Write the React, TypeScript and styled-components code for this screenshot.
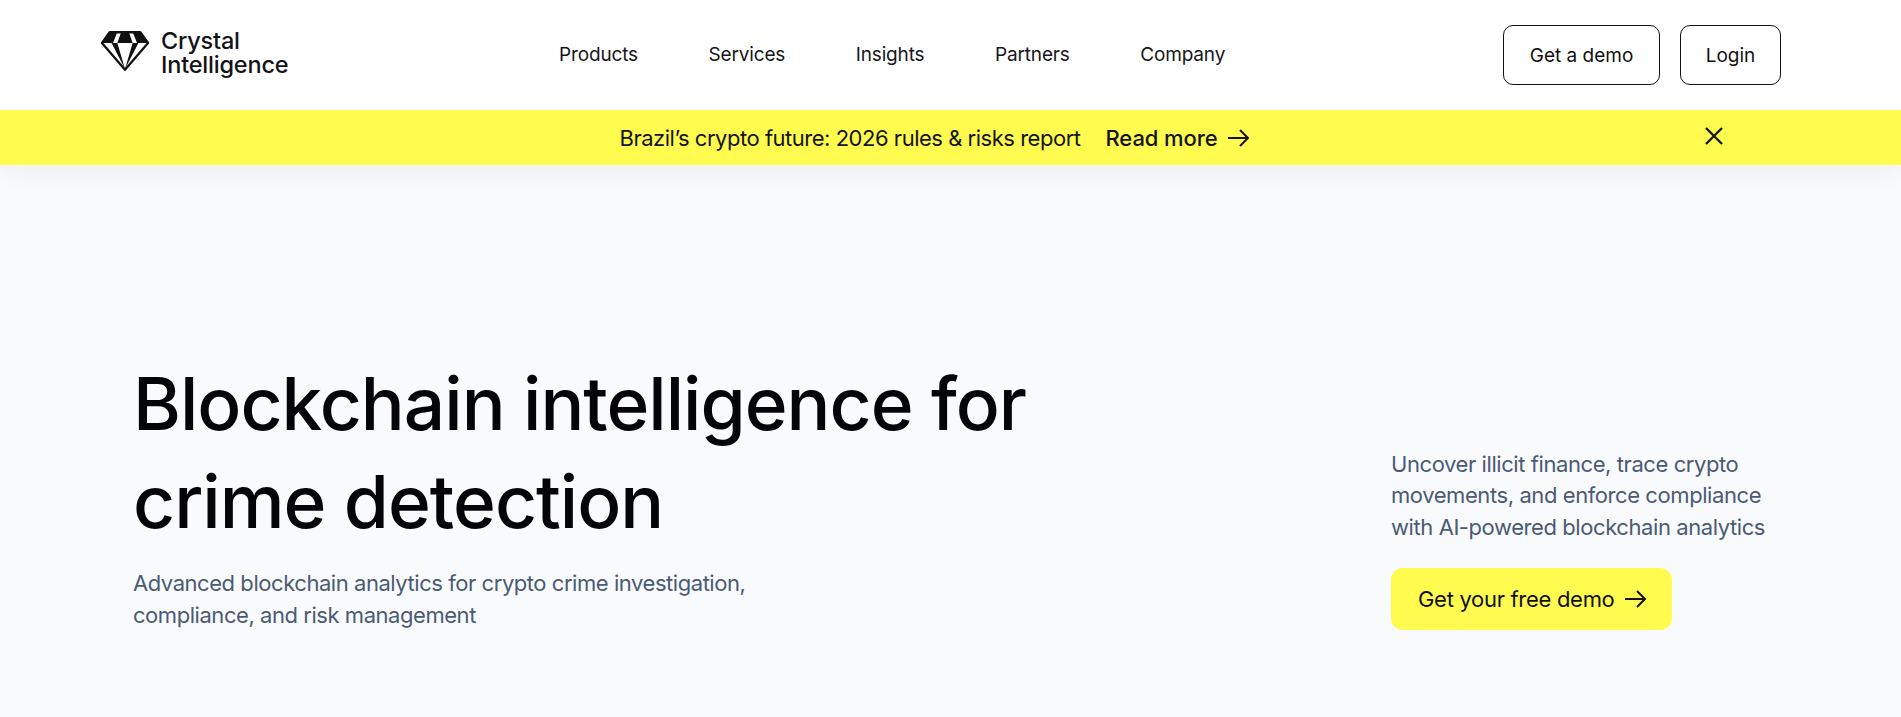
import React from "react";
import styled, { createGlobalStyle } from "styled-components";

const Global = createGlobalStyle`
  html, body { margin: 0; padding: 0; background: #f9fafc; }
  body { font-family: "Inter", "Liberation Sans", sans-serif; color: #0b0b0f; overflow: hidden; }
  * { box-sizing: border-box; }
`;

const Page = styled.div`
  width: 1901px;
  height: 717px;
  overflow: hidden;
  background: #f9fafc;
`;
const Top = styled.div`
  box-shadow: 0 6px 24px rgba(20, 30, 50, 0.05);
`;
const Header = styled.header`
  height: 110px;
  background: #fff;
  display: flex;
  align-items: center;
  padding: 0 120px 0 101px;
`;
const Brand = styled.a`
  display: flex;
  align-items: center;
  gap: 12px;
  width: 458px;
  flex: none;
  margin-bottom: 4px;
`;
const BrandName = styled.span`
  font-size: 23.5px;
  line-height: 24.5px;
  font-weight: 500;
  letter-spacing: -0.2px;
  color: #141418;
`;
const LogoMark = styled.svg`
  flex: none;
  width: 48px;
  height: 40px;
  margin-bottom: 4px;
`;
const Nav = styled.nav`
  display: flex;
  gap: 70.5px;
  flex: 1;
  margin-bottom: 2px;
`;
const NavLink = styled.a`
  font-size: 19px;
  letter-spacing: -0.15px;
  color: #16161a;
`;
const Actions = styled.div`
  display: flex;
  gap: 20px;
`;
const OutlineButton = styled.a<{ $w: number }>`
  width: ${(p) => p.$w}px;
  height: 60px;
  display: flex;
  align-items: center;
  justify-content: center;
  border: 1px solid #111;
  border-radius: 10px;
  font-size: 19px;
  letter-spacing: 0;
  background: #fff;
  color: #111;
`;
const Banner = styled.div`
  height: 55px;
  background: #fffb4f;
  display: flex;
  align-items: center;
  justify-content: center;
  position: relative;
  padding-right: 32px;
  font-size: 22px;
  letter-spacing: -0.48px;
  color: #141418;
`;
const BannerText = styled.span`
  margin-right: 25px;
`;
const ReadMore = styled.a`
  display: flex;
  align-items: center;
  gap: 8px;
  font-weight: 500;
  letter-spacing: -0.1px;
`;
const Close = styled.button`
  position: absolute;
  left: 1702px;
  top: 14px;
  width: 24px;
  height: 24px;
  padding: 0;
  border: 0;
  background: none;
  color: #1a1a1a;
`;
const Hero = styled.section`
  display: flex;
  justify-content: space-between;
  align-items: flex-end;
  padding: 190px 0 0 133px;
`;
const HeroLeft = styled.div`
  width: 1000px;
`;
const Title = styled.h1`
  margin: 0 0 16px;
  font-size: 73px;
  line-height: 98px;
  font-weight: 500;
  letter-spacing: -1px;
  color: #050507;
`;
const Sub = styled.p`
  margin: 0;
  font-size: 22px;
  line-height: 32px;
  letter-spacing: -0.45px;
  color: #4a5a75;
`;
const HeroRight = styled.div`
  width: 510px;
  margin-bottom: 1px;
`;
const Lead = styled.p`
  margin: 0 0 25px;
  font-size: 22px;
  line-height: 31.5px;
  letter-spacing: -0.42px;
  color: #4a5a75;
`;
const Cta = styled.a`
  display: inline-flex;
  align-items: center;
  gap: 8px;
  width: 281px;
  height: 62px;
  padding-left: 27px;
  background: #fffb4f;
  border-radius: 12px;
  font-size: 22px;
  letter-spacing: -0.3px;
  color: #111;
`;

const Arrow = () => (
  <svg width="24" height="24" viewBox="0 0 24 24" fill="none" stroke="currentColor" strokeWidth="2" aria-hidden>
    <path d="M2 12h20M14 4l8 8-8 8" />
  </svg>
);

const Logo = () => (
  <LogoMark viewBox="0 0 50 40" preserveAspectRatio="none" aria-hidden>
    <path d="M9 1.2H41L49 12L25 38.8L1 12Z" fill="#fff" stroke="#111" strokeWidth="2.4" strokeLinejoin="round" />
    <path d="M9 1H17L12.5 12H1ZM21 1H29L33 12H17ZM33 1H41L49 12H37.5Z" fill="#111" />
    <path d="M11 12H17L25 38ZM39 12H33L25 38Z" fill="#111" />
  </LogoMark>
);

export default function App() {
  return (
    <Page>
      <Global />
      <Top>
        <Header>
          <Brand>
            <Logo />
            <BrandName>
              Crystal
              <br />
              Intelligence
            </BrandName>
          </Brand>
          <Nav>
            {["Products", "Services", "Insights", "Partners", "Company"].map((n) => (
              <NavLink key={n}>{n}</NavLink>
            ))}
          </Nav>
          <Actions>
            <OutlineButton $w={157}>Get a demo</OutlineButton>
            <OutlineButton $w={101}>Login</OutlineButton>
          </Actions>
        </Header>
        <Banner>
          <BannerText>Brazil’s crypto future: 2026 rules &amp; risks report</BannerText>
          <ReadMore>
            Read more <Arrow />
          </ReadMore>
          <Close aria-label="Close">
            <svg width="24" height="24" viewBox="0 0 24 24" fill="none" stroke="currentColor" strokeWidth="2.4">
              <path d="M4 4l16 16M20 4L4 20" />
            </svg>
          </Close>
        </Banner>
      </Top>
      <Hero>
        <HeroLeft>
          <Title>
            Blockchain intelligence for
            <br />
            crime detection
          </Title>
          <Sub>
            Advanced blockchain analytics for crypto crime investigation,
            <br />
            compliance, and risk management
          </Sub>
        </HeroLeft>
        <HeroRight>
          <Lead>
            Uncover illicit finance, trace crypto
            <br />
            movements, and enforce compliance
            <br />
            with AI-powered blockchain analytics
          </Lead>
          <Cta>
            Get your free demo <Arrow />
          </Cta>
        </HeroRight>
      </Hero>
    </Page>
  );
}
